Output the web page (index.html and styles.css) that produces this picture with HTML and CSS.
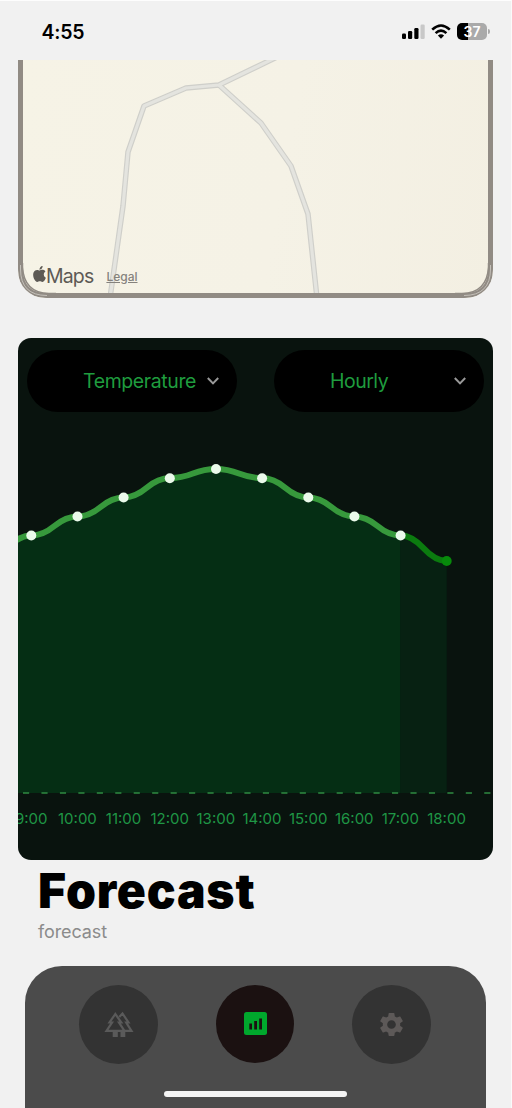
FILE: index.html
```html
<!DOCTYPE html>
<html lang="en">
<head>
<meta charset="utf-8">
<title>Forecast</title>
<link rel="stylesheet" href="styles.css">
</head>
<body>
<div class="screen">
  <header class="status">
    <span class="clock">4:55</span>
    <div class="status-icons">
      <svg class="signal" width="23" height="15" viewBox="0 0 23 15">
        <rect x="0" y="9.5" width="4" height="5.5" rx="1.2"/>
        <rect x="6" y="7" width="4.2" height="8" rx="1.2"/>
        <rect x="12.3" y="4" width="4.2" height="11" rx="1.2"/>
        <rect class="off" x="18.5" y="0.5" width="4.2" height="14.5" rx="1.2"/>
      </svg>
      <svg width="20" height="15" viewBox="0 0 20 15" fill="none" stroke="#000" stroke-width="2.6">
        <path d="M1.2 5.6Q10-2.6 18.8 5.6"/>
        <path d="M4.6 9.1Q10 4.2 15.4 9.1"/>
        <path d="M10 14.8L6.9 11.6Q10 9 13.1 11.6Z" fill="#000" stroke="none"/>
      </svg>
      <div class="battery-wrap"><div class="battery">37</div><i class="battery-cap"></i></div>
    </div>
  </header>

  <section class="map">
    <svg class="map-art" width="475" height="238" viewBox="0 0 475 238">
      <g class="road-edge"><path d="M92 238L105 146L110 92L126 46L168 28L201 25L259-3"/><path d="M201 25L243 63L273 106L290 154L299 238"/></g>
      <g class="road"><path d="M92 238L105 146L110 92L126 46L168 28L201 25L259-3"/><path d="M201 25L243 63L273 106L290 154L299 238"/></g>
      <path class="frame" d="M2.500 0V209Q2.500 235.500 29 235.500H446Q472.500 235.500 472.500 209V0"/>
      <path class="frame-line" d="M2.500 205V209Q2.500 235.500 29 235.500M446 235.500Q472.500 235.500 472.500 209V205"/>
      <path class="frame-in" d="M4.500 203V207Q6 233 31 233.500H38M437 233.500H444Q469 233 470.500 207V203"/>
    </svg>
    <div class="attribution">
      <svg width="13" height="16" viewBox="2 0 20 24" preserveAspectRatio="none"><path d="M12.152 6.896c-.948 0-2.415-1.078-3.96-1.04-2.04.027-3.91 1.183-4.961 3.014-2.117 3.675-.546 9.103 1.519 12.09 1.013 1.454 2.208 3.09 3.792 3.039 1.52-.065 2.09-.987 3.935-.987 1.831 0 2.35.987 3.96.948 1.637-.026 2.676-1.48 3.676-2.948 1.156-1.688 1.636-3.325 1.662-3.415-.039-.013-3.182-1.221-3.22-4.857-.026-3.04 2.48-4.494 2.597-4.559-1.429-2.09-3.623-2.324-4.39-2.376-2-.156-3.675 1.09-4.61 1.09zM15.53 3.83c.843-1.012 1.4-2.427 1.245-3.83-1.207.052-2.662.805-3.532 1.818-.78.896-1.454 2.338-1.273 3.714 1.338.104 2.715-.688 3.559-1.701"/></svg>
      <span class="maps">Maps</span>
      <span class="legal">Legal</span>
    </div>
  </section>

  <section class="card">
    <div class="selects">
      <div class="select"><span class="temperature">Temperature</span><svg width="12" height="8" viewBox="0 0 12 8"><path d="M.8 1L6 6.400L11.200 1"/></svg></div>
      <div class="select"><span class="hourly">Hourly</span><svg width="12" height="8" viewBox="0 0 12 8"><path d="M.8 1L6 6.400L11.200 1"/></svg></div>
    </div>
    <svg class="chart" width="475" height="390" viewBox="0 0 475 390">
      <path class="area" d="M-32.800 381V146Q-21 146-9.800 134.800Q1.800 123.500 13.300 123.500Q24.900 123.500 36.400 114Q48 104.500 59.500 104.500Q71 104.500 82.600 95Q94.100 85.500 105.600 85.500Q117.200 85.500 128.700 75.800Q140.200 66 151.800 66Q163.300 66 174.900 61.500Q186.400 57 198 57Q209.500 57 221 61.500Q232.600 66 244.100 66Q255.700 66 267.200 75.800Q278.700 85.500 290.300 85.500Q301.800 85.500 313.400 95Q324.900 104.500 336.400 104.500Q348 104.500 359.500 114Q371 123.500 382.600 123.500V381Z"/>
      <path class="area-last" d="M382.600 381V123.500Q394.100 123.500 405.600 136.300Q417.200 149 428.700 149V381Z"/>
      <path class="axis" d="M5 381H475"/>
      <path class="line-last" d="M382.600 123.500Q394.100 123.500 405.600 136.300Q417.200 149 428.700 149"/>
      <path class="line" d="M-32.800 146Q-21 146-9.800 134.800Q1.800 123.500 13.300 123.500Q24.900 123.500 36.400 114Q48 104.500 59.500 104.500Q71 104.500 82.600 95Q94.100 85.500 105.600 85.500Q117.200 85.500 128.700 75.800Q140.200 66 151.800 66Q163.300 66 174.900 61.500Q186.400 57 198 57Q209.500 57 221 61.500Q232.600 66 244.100 66Q255.700 66 267.200 75.800Q278.700 85.500 290.300 85.500Q301.800 85.500 313.400 95Q324.900 104.500 336.400 104.500Q348 104.500 359.500 114Q371 123.500 382.600 123.500"/>
      <g class="dots">
        <circle cx="13.300" cy="123.500" r="5"/><circle cx="59.500" cy="104.500" r="5"/><circle cx="105.600" cy="85.500" r="5"/><circle cx="151.800" cy="66.300" r="5"/><circle cx="198" cy="57" r="5"/><circle cx="244.100" cy="66.300" r="5"/><circle cx="290.300" cy="85.500" r="5"/><circle cx="336.400" cy="104.500" r="5"/><circle cx="382.600" cy="123.500" r="5"/>
        <circle class="dot-last" cx="428.700" cy="149" r="5"/>
      </g>
    </svg>
    <div class="hours"><span>9:00</span><span>10:00</span><span>11:00</span><span>12:00</span><span>13:00</span><span>14:00</span><span>15:00</span><span>16:00</span><span>17:00</span><span>18:00</span></div>
  </section>

  <section class="heading">
    <h1>Forecast</h1>
    <p>forecast</p>
  </section>

  <nav class="tabs">
    <div class="tab-row">
      <div class="tab">
        <svg width="30" height="27" viewBox="0 0 30 27" fill="none" stroke="#5a5a5a" stroke-width="2.200">
          <path d="M11.300 3L5.500 11.500H8L2.500 19.800H20.500L15 11.500H17.300Z"/>
          <path d="M15.200 6L18.500 2.500L24.500 11.500H22.200L27.500 19.800H20.500"/>
          <path d="M8.700 20.500H13.800V26H8.700ZM16.500 20.500H21.300V26H16.500Z" fill="#5a5a5a" stroke="none"/>
        </svg>
      </div>
      <div class="tab active">
        <svg width="23" height="23" viewBox="0 0 23 23"><rect width="23" height="23" rx="2.500" fill="#00a82d"/><path d="M5.300 11.500H8V17.500H5.300ZM10.200 9H13V17.500H10.200ZM15.200 6.500H18V17.500H15.200Z" fill="#1b1111"/></svg>
      </div>
      <div class="tab">
        <svg width="29" height="29" viewBox="0 0 24 24"><path fill="#5d5958" d="M19.140 12.940c.04-.3.060-.61.060-.94 0-.32-.02-.64-.07-.94l2.030-1.580c.18-.14.230-.41.120-.61l-1.920-3.320c-.12-.22-.37-.29-.59-.22l-2.390.96c-.5-.38-1.030-.7-1.620-.94l-.36-2.540c-.04-.24-.24-.41-.48-.41h-3.840c-.24 0-.43.170-.47.410l-.36 2.540c-.59.240-1.130.570-1.620.940l-2.390-.96c-.22-.08-.47 0-.59.220L2.740 8.870c-.12.210-.08.470.12.610l2.030 1.580c-.05.300-.09.630-.09.940s.02.640.070.940l-2.030 1.580c-.18.140-.23.410-.12.610l1.920 3.320c.12.220.370.290.59.220l2.390-.96c.5.380 1.030.700 1.620.940l.36 2.540c.05.240.240.410.480.410h3.840c.24 0 .44-.17.470-.41l.36-2.540c.59-.24 1.130-.56 1.620-.94l2.390.96c.22.080.470 0 .59-.22l1.920-3.320c.12-.22.070-.47-.12-.61l-2.010-1.580zM12 15.600c-1.980 0-3.600-1.620-3.600-3.600s1.620-3.600 3.600-3.600 3.600 1.620 3.600 3.600-1.620 3.600-3.600 3.600z"/></svg>
      </div>
    </div>
    <div class="home-indicator"></div>
  </nav>
</div>
</body>
</html>
```
FILE: styles.css
```css
* { box-sizing: border-box; }
body { margin: 0; background: #f1f1f1; font-family: Inter, "Liberation Sans", sans-serif; }
svg { display: block; flex: none; }
.screen { width: 512px; height: 1108px; border-top: 1px solid #fdfdfd; border-right: 1px solid #fafafa; display: flex; flex-direction: column; overflow: hidden; }

.status { height: 59px; flex: none; display: flex; justify-content: space-between; align-items: center; padding: 3px 21px 0 41.5px; }
.clock { font-size: 19.5px; font-weight: 600; line-height: 24px; letter-spacing: -0.25px; }
.status-icons { display: flex; align-items: center; gap: 6px; margin-top: -1px; }
.signal .off { fill: #c8c8c8; }
.battery-wrap { display: flex; align-items: center; gap: 1px; }
.battery { width: 30px; height: 17px; border-radius: 5px; background: linear-gradient(90deg, #000 38%, #aaa 38%); color: #fff; font-size: 14px; font-weight: 600; line-height: 17px; text-align: center; }
.battery-cap { width: 2px; height: 5px; background: #aaa; border-radius: 0 2px 2px 0; }

.map { width: 475px; height: 238px; flex: none; margin-left: 18px; display: grid; overflow: hidden; border-radius: 0 0 27px 27px; background: linear-gradient(100deg, #f6f3e6, #f5f2e6 55%, #f3efe2); }
.map-art, .attribution { grid-area: 1 / 1; }
.map-art path { fill: none; }
.road-edge { stroke: #cfcfca; stroke-width: 5.5; stroke-linejoin: round; }
.road { stroke: #e4e4df; stroke-width: 3.2; stroke-linejoin: round; }
.frame { stroke: #918b84; stroke-width: 5; }
.frame-line { stroke: #c4c0b9; stroke-width: 1; }
.frame-in { stroke: #918b84; stroke-width: 1.5; }
.attribution { align-self: end; display: flex; align-items: center; height: 24px; margin: 0 0 10px 15px; color: #5d5a55; }
.attribution svg { fill: #5d5a55; margin-top: -4px; }
.maps { font-size: 19.5px; letter-spacing: -0.85px; line-height: 24px; }
.legal { font-size: 12px; font-weight: 500; letter-spacing: 0; color: #85827d; text-decoration: underline; margin: 0 0 0 13px; }

.card { width: 475px; height: 522px; flex: none; margin: 40px 0 0 18px; padding-top: 12px; border-radius: 13px; background: #09130e; overflow: hidden; }
.selects { display: flex; gap: 37px; padding: 0 9px; }
.select { width: 210px; height: 62px; border-radius: 31px; background: #000; color: #1f9c3e; font-size: 19.5px; display: flex; align-items: center; padding-right: 18px; }
.select span { flex: 1; padding-left: 56px; }
.temperature { letter-spacing: -0.4px; }
.hourly { letter-spacing: -0.5px; }
.select svg { fill: none; stroke: #999; stroke-width: 2; }
.area { fill: #052e14; }
.area-last { fill: #072112; }
.axis { stroke: #2f8a42; stroke-width: 1.5; stroke-dasharray: 6.15 12.3; }
.line, .line-last { fill: none; stroke-width: 6; }
.line { stroke: #37993c; }
.line-last { stroke: #0b7b0f; }
.dots { fill: #ebfaeb; }
.dot-last { fill: #078a0b; }
.hours { display: flex; margin-left: -9.8px; padding-top: 7px; color: #1f9645; font-size: 15px; line-height: 20px; }
.hours span { width: 46.15px; flex: none; text-align: center; white-space: nowrap; }

.heading { padding: 1px 0 0 38px; height: 106px; flex: none; }
h1 { margin: 0; font-size: 48px; line-height: 60px; font-weight: 900; letter-spacing: 0.8px; color: #000; }
p { margin: -1px 0 0; font-size: 18px; line-height: 24px; letter-spacing: -0.1px; color: #8b8b8b; }

.tabs { width: 461px; height: 142px; flex: none; margin-left: 25px; border-radius: 37px 37px 0 0; background: #4b4b4b; display: flex; flex-direction: column; align-items: center; padding-top: 18.5px; gap: 27px; }
.tab-row { display: flex; gap: 58px; margin-right: 0.5px; }
.tab { width: 79px; height: 79px; border-radius: 50%; background: #333; display: flex; align-items: center; justify-content: center; }
.active { width: 78px; height: 78px; background: #1b1111; }
.home-indicator { width: 183px; height: 6px; border-radius: 3px; background: #f4f4f4; }
```
